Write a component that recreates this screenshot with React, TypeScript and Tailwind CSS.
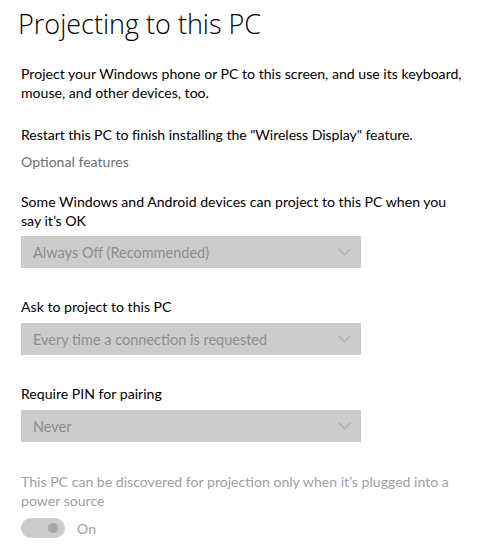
import React from "react";

function Chevron() {
  return (
    <svg width="13" height="8" viewBox="0 0 13 8" className="shrink-0">
      <path d="M0.5 0.8 L6.5 6.8 L12.5 0.8" fill="none" stroke="#9a9a9a" strokeWidth="1" />
    </svg>
  );
}

function Dropdown({ value }: { value: string }) {
  return (
    <div className="w-[340px] h-[32px] bg-[#cccccc] flex items-center justify-between pl-[12px] pr-[10px]">
      <span className="text-[#8c8c8c] text-[14.5px]">{value}</span>
      <Chevron />
    </div>
  );
}

export default function App() {
  return (
    <div
      className="w-[492px] h-[547px] bg-white overflow-hidden pl-[21px] text-[14.1px] leading-[19px] text-black whitespace-nowrap"
      style={{ fontFamily: 'Lato, "Noto Sans", sans-serif' }}
    >
      <h1
        className="text-[27px] leading-[40px] font-light pt-[4px] -ml-[3px] text-black"
        style={{ fontFamily: '"Open Sans", "Noto Sans", sans-serif' }}
      >
        Projecting to this PC
      </h1>
      <p className="mt-[20px]">
        Project your Windows phone or PC to this screen, and use its keyboard,
        <br />
        mouse, and other devices, too.
      </p>
      <p className="mt-[23px] tracking-[-0.05px]">
        Restart this PC to finish installing the "Wireless Display" feature.
      </p>
      <p className="mt-[8px] text-[#707070]">Optional features</p>
      <p className="mt-[21px]">
        Some Windows and Android devices can project to this PC when you
        <br />
        say it’s OK
      </p>
      <div className="mt-[6px]">
        <Dropdown value="Always Off (Recommended)" />
      </div>
      <p className="mt-[29px]">Ask to project to this PC</p>
      <div className="mt-[7px]">
        <Dropdown value="Every time a connection is requested" />
      </div>
      <p className="mt-[29px]">Require PIN for pairing</p>
      <div className="mt-[7px]">
        <Dropdown value="Never" />
      </div>
      <p className="mt-[30px] text-[#a0a0a0]">
        This PC can be discovered for projection only when it’s plugged into a
        <br />
        power source
      </p>
      <div className="mt-[8px] flex items-center">
        <div className="w-[44px] h-[20px] rounded-full bg-[#cccccc] flex items-center justify-end pr-[7px]">
          <div className="w-[10px] h-[10px] rounded-full bg-[#a6a6a6]" />
        </div>
        <span className="ml-[12px] text-[#a0a0a0]">On</span>
      </div>
    </div>
  );
}
